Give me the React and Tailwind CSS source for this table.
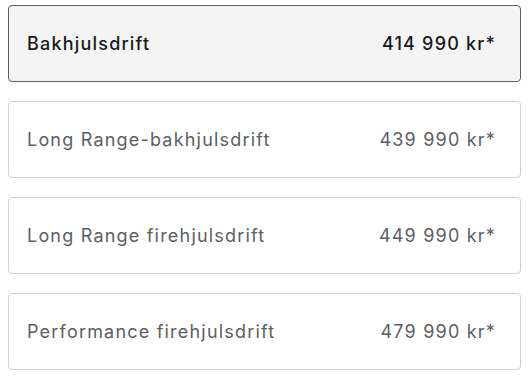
import React, { useState } from "react";

const trims = [
  { id: 1, name: "Bakhjulsdrift", price: "414 990 kr*" },
  { id: 2, name: "Long Range-bakhjulsdrift", price: "439 990 kr*" },
  { id: 3, name: "Long Range firehjulsdrift", price: "449 990 kr*" },
  { id: 4, name: "Performance firehjulsdrift", price: "479 990 kr*" },
];

export default function App() {
  const [selected, setSelected] = useState(1);

  return (
    <div
      className="w-[529px] h-[380px] bg-white px-2 pt-[5px] flex flex-col gap-[19px]"
      style={{ fontFamily: "Inter, 'Noto Sans', sans-serif" }}
    >
      {trims.map((trim) => {
        const active = trim.id === selected;
        return (
          <button
            key={trim.id}
            onClick={() => setSelected(trim.id)}
            className={`h-[77px] w-[513px] flex items-center justify-between pl-[18px] pr-[24px] rounded-[4px] border text-[18px] tracking-[1.2px] ${
              active
                ? "bg-[#f4f4f4] border-[#5c5e62] text-[#171a20] font-medium"
                : "bg-white border-[#d0d1d2] text-[#5c5e62]"
            }`}
          >
            <span>{trim.name}</span>
            <span>{trim.price}</span>
          </button>
        );
      })}
    </div>
  );
}
